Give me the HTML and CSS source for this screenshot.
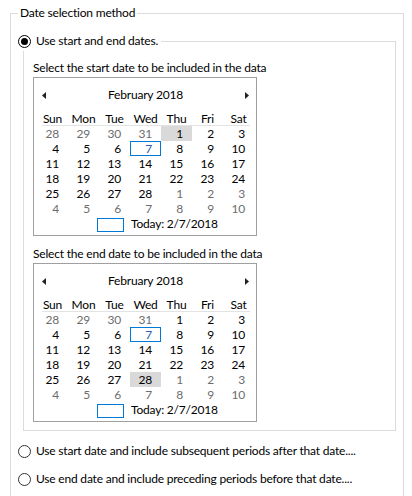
FILE: index.html
```html
<!DOCTYPE html>
<html>
<head>
<meta charset="utf-8">
<link rel="stylesheet" href="styles.css">
</head>
<body>
<fieldset class="group outer">
  <legend class="group-title">Date selection method</legend>
  <fieldset class="group inner">
    <legend class="radio-legend"><span class="radio checked"></span><span>Use start and end dates.</span></legend>
    <div class="caption">Select the start date to be included in the data</div>
    <div class="cal">
      <div class="cal-head">
        <svg class="arrow" width="4" height="7" viewBox="0 0 4 7"><polygon points="4,0 4,7 0,3.5" fill="#222"/></svg>
        <span class="cal-title">February 2018</span>
        <svg class="arrow" width="4" height="7" viewBox="0 0 4 7"><polygon points="0,0 0,7 4,3.5" fill="#222"/></svg>
      </div>
      <div class="dow"><span>Sun</span><span>Mon</span><span>Tue</span><span>Wed</span><span>Thu</span><span>Fri</span><span>Sat</span></div>
      <div class="sep"></div>
      <div class="days">
        <span class="day other">28</span><span class="day other">29</span><span class="day other">30</span><span class="day other">31</span><span class="day sel">1</span><span class="day">2</span><span class="day">3</span>
        <span class="day">4</span><span class="day">5</span><span class="day">6</span><span class="day today">7</span><span class="day">8</span><span class="day">9</span><span class="day">10</span>
        <span class="day">11</span><span class="day">12</span><span class="day">13</span><span class="day">14</span><span class="day">15</span><span class="day">16</span><span class="day">17</span>
        <span class="day">18</span><span class="day">19</span><span class="day">20</span><span class="day">21</span><span class="day">22</span><span class="day">23</span><span class="day">24</span>
        <span class="day">25</span><span class="day">26</span><span class="day">27</span><span class="day">28</span><span class="day other">1</span><span class="day other">2</span><span class="day other">3</span>
        <span class="day other">4</span><span class="day other">5</span><span class="day other">6</span><span class="day other">7</span><span class="day other">8</span><span class="day other">9</span><span class="day other">10</span>
      </div>
      <div class="today-row"><span class="today-box"></span><span>Today: 2/7/2018</span></div>
    </div>
    <div class="caption second">Select the end date to be included in the data</div>
    <div class="cal">
      <div class="cal-head">
        <svg class="arrow" width="4" height="7" viewBox="0 0 4 7"><polygon points="4,0 4,7 0,3.5" fill="#222"/></svg>
        <span class="cal-title">February 2018</span>
        <svg class="arrow" width="4" height="7" viewBox="0 0 4 7"><polygon points="0,0 0,7 4,3.5" fill="#222"/></svg>
      </div>
      <div class="dow"><span>Sun</span><span>Mon</span><span>Tue</span><span>Wed</span><span>Thu</span><span>Fri</span><span>Sat</span></div>
      <div class="sep"></div>
      <div class="days">
        <span class="day other">28</span><span class="day other">29</span><span class="day other">30</span><span class="day other">31</span><span class="day">1</span><span class="day">2</span><span class="day">3</span>
        <span class="day">4</span><span class="day">5</span><span class="day">6</span><span class="day today">7</span><span class="day">8</span><span class="day">9</span><span class="day">10</span>
        <span class="day">11</span><span class="day">12</span><span class="day">13</span><span class="day">14</span><span class="day">15</span><span class="day">16</span><span class="day">17</span>
        <span class="day">18</span><span class="day">19</span><span class="day">20</span><span class="day">21</span><span class="day">22</span><span class="day">23</span><span class="day">24</span>
        <span class="day">25</span><span class="day">26</span><span class="day">27</span><span class="day sel">28</span><span class="day other">1</span><span class="day other">2</span><span class="day other">3</span>
        <span class="day other">4</span><span class="day other">5</span><span class="day other">6</span><span class="day other">7</span><span class="day other">8</span><span class="day other">9</span><span class="day other">10</span>
      </div>
      <div class="today-row"><span class="today-box"></span><span>Today: 2/7/2018</span></div>
    </div>
  </fieldset>
  <div class="option first"><span class="radio"></span><span>Use start date and include subsequent periods after that date....</span></div>
  <div class="option"><span class="radio"></span><span>Use end date and include preceding periods before that date....</span></div>
</fieldset>
</body>
</html>
```
FILE: styles.css
```css
html, body {
  margin: 0;
  background: #fff;
  overflow: hidden;
}
body {
  font-family: Lato, "Noto Sans", sans-serif;
  font-size: 12px;
  line-height: 16px;
  letter-spacing: -0.2px;
  color: #000;
}
.group {
  border: 1px solid #dcdcdc;
  margin: 0;
  padding: 0;
  min-width: 0;
  box-sizing: border-box;
}
.outer {
  margin: 5px 0 0 10px;
  width: 394px;
  padding-bottom: 60px;
}
.group-title {
  margin-left: 7px;
  padding: 0 2px;
  line-height: 16px;
}
.inner {
  margin: 10px 0 0 12px;
  width: 373px;
  padding: 9px 0 8px 9px;
}
.radio-legend {
  display: flex;
  align-items: center;
  gap: 5px;
  height: 20px;
  margin-left: -16px;
  padding: 0 3px 0 1px;
  background: #fff;
}
.radio {
  flex: none;
  width: 13px;
  height: 13px;
  box-sizing: border-box;
  border: 1px solid #333;
  border-radius: 50%;
  background: #fff;
  display: flex;
  align-items: center;
  justify-content: center;
}
.radio.checked {
  border-color: #000;
}
.radio.checked::after {
  content: "";
  width: 7px;
  height: 7px;
  border-radius: 50%;
  background: #000;
}
.caption {
  line-height: 16px;
}
.caption.second {
  margin-top: 10px;
}
.cal {
  width: 224px;
  box-sizing: border-box;
  border: 1px solid #a0a0a0;
  margin-top: 1px;
  padding: 0 2px 0 3px;
}
.cal-head {
  display: flex;
  align-items: center;
  justify-content: space-between;
  height: 34px;
  padding: 0 5px;
}
.arrow {
  display: block;
}
.dow {
  display: grid;
  grid-template-columns: repeat(7, 31px);
  height: 13px;
  line-height: 13px;
  text-align: center;
}
.sep {
  height: 1px;
  background: #e3e3e3;
  margin: 0 4px 0 5px;
}
.days {
  display: grid;
  grid-template-columns: repeat(7, 31px);
  grid-auto-rows: 15px;
  line-height: 15px;
}
.day {
  text-align: right;
  padding-right: 9px;
}
.day.other {
  color: #6d6d6d;
}
.day.sel {
  background: #d9d9d9;
}
.day.today {
  box-shadow: inset 0 0 0 1px #0078d7;
  color: #2a5db0;
}
.today-row {
  display: flex;
  align-items: flex-start;
  gap: 7px;
  height: 19px;
  padding-left: 60px;
}
.today-box {
  width: 27px;
  height: 14px;
  margin-top: 2px;
  box-sizing: border-box;
  border: 1px solid #0078d7;
}
.option {
  display: flex;
  align-items: center;
  gap: 5px;
  height: 20px;
  margin-left: 7px;
}
.option.first {
  margin-top: 10px;
}
.option + .option {
  margin-top: 8px;
}
```
